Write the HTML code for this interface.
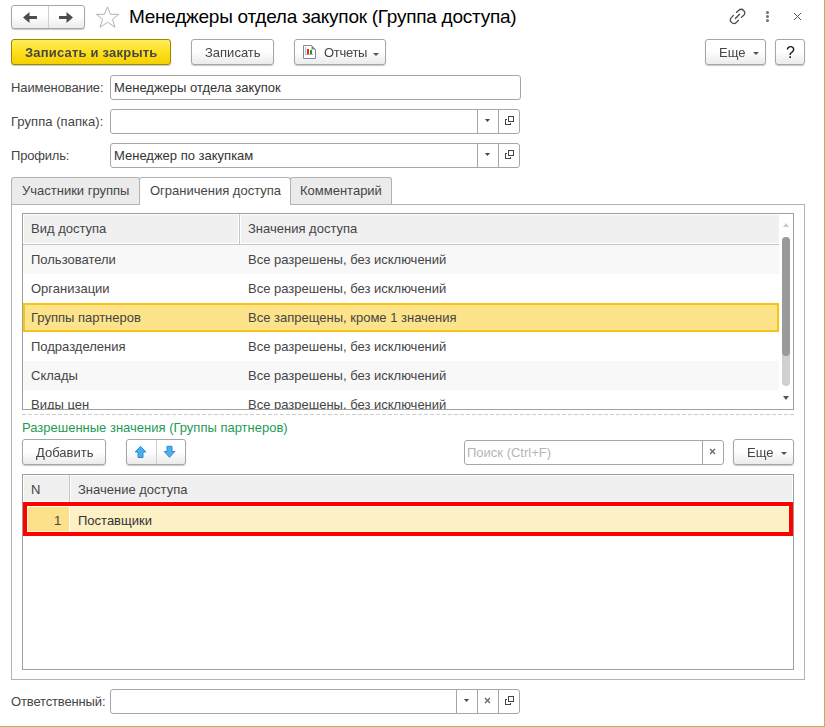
<!DOCTYPE html>
<html><head><meta charset="utf-8">
<style>
*{box-sizing:border-box}
html,body{margin:0;padding:0;width:825px;height:727px;overflow:hidden;background:#fff}
body{position:relative;font-family:"Liberation Sans",sans-serif;font-size:13px;color:#454545}
.a{position:absolute}
svg.a{overflow:visible}
.t{position:absolute;white-space:nowrap;line-height:15px}
.btn{position:absolute;border:1px solid #a6a6a6;border-radius:3px;background:linear-gradient(#ffffff 0%,#ffffff 45%,#ebebeb 100%);box-shadow:0 1px 1px rgba(0,0,0,.22);color:#444}
.btn .t{will-change:transform}
.fld{position:absolute;border:1px solid #a6a6a6;border-radius:3px;background:#fff}
.vd{position:absolute;top:0;bottom:0;width:1px;background:#a6a6a6}
</style></head><body>

<!-- window border -->
<div class="a" style="left:824px;top:0;width:1px;height:727px;background:#c0b05c"></div>
<div class="a" style="left:0;top:726px;width:825px;height:1px;background:#c0b05c"></div>

<!-- nav buttons -->
<div class="btn" style="left:11px;top:5px;width:74px;height:24px"></div>
<div class="a" style="left:48px;top:6px;width:1px;height:22px;background:#cfcfcf"></div>
<svg class="a" style="left:22px;top:11px" width="16" height="13" viewBox="0 0 16 13"><path d="M1 6.5 L7.5 1 V5 H15 V8 H7.5 V12 Z" fill="#4d4d4d"/></svg>
<svg class="a" style="left:58px;top:11px" width="16" height="13" viewBox="0 0 16 13"><path d="M15 6.5 L8.5 1 V5 H1 V8 H8.5 V12 Z" fill="#4d4d4d"/></svg>

<!-- star -->
<svg class="a" style="left:95px;top:6px" width="25" height="23" viewBox="0 0 25 23"><path d="M12.5 0.8 L15.6 8.3 L23.7 8.3 L17.4 13.4 L20 21.3 L12.5 16.3 L5 21.3 L7.6 13.4 L1.3 8.3 L9.4 8.3 Z" fill="none" stroke="#abb4be" stroke-width="1"/></svg>

<!-- title -->
<div class="t" style="left:129px;top:6px;font-size:19px;line-height:22px;color:#000;letter-spacing:-0.25px">Менеджеры отдела закупок (Группа доступа)</div>

<!-- top right icons -->
<svg class="a" style="left:726px;top:5px" width="24" height="24" viewBox="0 0 24 24"><g fill="none" stroke="#484848" stroke-width="1.25" stroke-linecap="round"><path d="M9.4 13.5 L13.5 9.2"/><path d="M7.4 10.4 L5.33 12.63 A3.5 3.5 0 0 0 10.27 17.57 L12.4 15.3"/><path d="M10.4 7.4 L12.83 5.33 A3.5 3.5 0 0 1 17.77 10.27 L15.3 12.4"/></g></svg>
<div class="a" style="left:766px;top:11px;width:3px;height:3px;border-radius:50%;background:#707070"></div>
<div class="a" style="left:766px;top:15px;width:3px;height:3px;border-radius:50%;background:#707070"></div>
<div class="a" style="left:766px;top:19px;width:3px;height:3px;border-radius:50%;background:#707070"></div>
<svg class="a" style="left:792px;top:11px" width="11" height="11" viewBox="0 0 11 11"><path d="M2 2 L9 9 M9 2 L2 9" stroke="#555" stroke-width="1"/></svg>

<!-- command bar -->
<div class="btn" style="left:11px;top:39px;width:160px;height:26px;border-color:#9c8800;background:linear-gradient(#ffec5c 0%,#ffe01e 50%,#f3d000 100%)">
  <div class="t" style="left:13px;top:5px;font-weight:bold;color:#474747;letter-spacing:0.2px">Записать и закрыть</div></div>
<div class="btn" style="left:191px;top:39px;width:83px;height:26px"><div class="t" style="left:13px;top:5px">Записать</div></div>
<div class="btn" style="left:294px;top:39px;width:92px;height:26px">
  <svg class="a" style="left:7px;top:4px" width="15" height="16" viewBox="0 0 15 16"><path d="M1.5 1.5 H9.5 L13.5 5.5 V14.5 H1.5 Z" fill="#fff" stroke="#7d8b98"/><path d="M9.5 1.5 V5.5 H13.5 Z" fill="#7d8b98"/><rect x="3" y="3" width="1" height="8" fill="#a9c6cc"/><rect x="3" y="10" width="8" height="1" fill="#b9a9c9"/><rect x="5" y="5" width="2" height="5" fill="#ff1a1a"/><rect x="8" y="6" width="2" height="4" fill="#19a019"/></svg>
  <div class="t" style="left:29px;top:5px;letter-spacing:-0.3px">Отчеты</div>
  <svg class="a" style="left:78px;top:13px" width="6" height="4" viewBox="0 0 6 4"><path d="M0 0 H6 L3 3 Z" fill="#555"/></svg>
</div>
<div class="btn" style="left:705px;top:39px;width:61px;height:26px"><div class="t" style="left:13px;top:5px">Еще</div>
  <svg class="a" style="left:47px;top:12px" width="6" height="4" viewBox="0 0 6 4"><path d="M0 0 H6 L3 3 Z" fill="#555"/></svg></div>
<div class="btn" style="left:775px;top:39px;width:30px;height:26px"><div class="t" style="left:0;width:29px;text-align:center;top:4px;color:#111;font-size:16px;line-height:17px">?</div></div>

<!-- fields -->
<div class="t" style="left:11px;top:80px;letter-spacing:-0.1px">Наименование:</div>
<div class="fld" style="left:110px;top:75px;width:411px;height:25px"><div class="t" style="left:3px;top:4px;color:#333">Менеджеры отдела закупок</div></div>

<div class="t" style="left:11px;top:114px;letter-spacing:0.05px">Группа (папка):</div>
<div class="fld" style="left:110px;top:109px;width:410px;height:25px">
  <div class="vd" style="left:366px"></div><div class="vd" style="left:387px"></div>
</div>
<div class="t" style="left:11px;top:148px;letter-spacing:-0.2px">Профиль:</div>
<div class="fld" style="left:110px;top:143px;width:410px;height:25px"><div class="t" style="left:3px;top:4px;color:#333">Менеджер по закупкам</div>
  <div class="vd" style="left:366px"></div><div class="vd" style="left:387px"></div>
</div>
<svg class="a" style="left:485px;top:119px" width="5" height="4" viewBox="0 0 5 4"><path d="M0 0 H5 L2.5 3 Z" fill="#444"/></svg>
<svg class="a" style="left:504px;top:115px" width="11" height="11" viewBox="0 0 11 11" shape-rendering="crispEdges"><path d="M4.5 1.5 H9.5 V6.5 H4.5 Z" fill="none" stroke="#444"/><path d="M2.5 4.5 H1.5 V9.5 H6.5 V8.5" fill="none" stroke="#444" stroke-linecap="square"/></svg>
<svg class="a" style="left:485px;top:153px" width="5" height="4" viewBox="0 0 5 4"><path d="M0 0 H5 L2.5 3 Z" fill="#444"/></svg>
<svg class="a" style="left:504px;top:149px" width="11" height="11" viewBox="0 0 11 11" shape-rendering="crispEdges"><path d="M4.5 1.5 H9.5 V6.5 H4.5 Z" fill="none" stroke="#444"/><path d="M2.5 4.5 H1.5 V9.5 H6.5 V8.5" fill="none" stroke="#444" stroke-linecap="square"/></svg>

<!-- tabs -->
<div class="a" style="left:11px;top:177px;width:129px;height:28px;border:1px solid #b2b2b2;border-bottom:none;background:#ebebeb;border-radius:3px 3px 0 0"></div>
<div class="t" style="left:22px;top:183px">Участники группы</div>
<div class="a" style="left:290px;top:177px;width:102px;height:28px;border:1px solid #b2b2b2;border-bottom:none;background:#ebebeb;border-radius:3px 3px 0 0"></div>
<div class="t" style="left:300px;top:183px">Комментарий</div>
<div class="a" style="left:139px;top:177px;width:152px;height:28px;border:1px solid #b2b2b2;border-bottom:none;background:#fff;border-radius:3px 3px 0 0"></div>
<div class="t" style="left:150px;top:183px">Ограничения доступа</div>

<!-- panel -->
<div class="a" style="left:11px;top:204px;width:794px;height:476px;border:1px solid #b2b2b2;border-top:none"></div>
<div class="a" style="left:11px;top:204px;width:129px;height:1px;background:#b2b2b2"></div>
<div class="a" style="left:290px;top:204px;width:515px;height:1px;background:#b2b2b2"></div>

<!-- table 1 -->
<div class="a" style="left:22px;top:213px;width:772px;height:197px;border:1px solid #a0a0a0;background:#fff;overflow:hidden">
  <div class="a" style="left:0;top:1px;width:756px;height:30px;background:#f0f0f0;border-bottom:1px solid #c6c6c6;box-shadow:inset 0 -1px 0 #fff,inset 1px 0 0 #fff"></div>
  <div class="a" style="left:215px;top:1px;width:1px;height:29px;background:#fff"></div>
  <div class="a" style="left:216px;top:0;width:1px;height:30px;background:#c6c6c6"></div>
  <div class="a" style="left:217px;top:1px;width:1px;height:29px;background:#fff"></div>
  <div class="t" style="left:8px;top:7px">Вид доступа</div>
  <div class="t" style="left:225px;top:7px">Значения доступа</div>
  <div class="a" style="left:0;top:31px;width:756px;height:29px;background:#f8f8f8"></div>
  <div class="t" style="left:8px;top:38px">Пользователи</div><div class="t" style="left:225px;top:38px">Все разрешены, без исключений</div>
  <div class="t" style="left:8px;top:67px">Организации</div><div class="t" style="left:225px;top:67px">Все разрешены, без исключений</div>
  <div class="a" style="left:0;top:89px;width:756px;height:29px;background:#fde38a;border:2px solid #f6c416"></div>
  <div class="t" style="left:8px;top:96px">Группы партнеров</div><div class="t" style="left:225px;top:96px">Все запрещены, кроме 1 значения</div>
  <div class="t" style="left:8px;top:125px">Подразделения</div><div class="t" style="left:225px;top:125px">Все разрешены, без исключений</div>
  <div class="a" style="left:0;top:147px;width:756px;height:29px;background:#f8f8f8"></div>
  <div class="t" style="left:8px;top:154px">Склады</div><div class="t" style="left:225px;top:154px">Все разрешены, без исключений</div>
  <div class="t" style="left:8px;top:183px">Виды цен</div><div class="t" style="left:225px;top:183px">Все разрешены, без исключений</div>
  <!-- scrollbar -->
  <svg class="a" style="left:760px;top:9px" width="6" height="4" viewBox="0 0 6 4"><path d="M0 4 H6 L3 0 Z" fill="#cacaca"/></svg>
  <div class="a" style="left:759px;top:23px;width:8px;height:149px;border-radius:4px;background:#d0d0d0"></div>
  <div class="a" style="left:759px;top:23px;width:8px;height:119px;border-radius:4px;background:#9a9a9a"></div>
  <svg class="a" style="left:760px;top:182px" width="6" height="4" viewBox="0 0 6 4"><path d="M0 0 H6 L3 4 Z" fill="#555"/></svg>
</div>
<!-- dashed -->
<div class="a" style="left:22px;top:414px;width:772px;height:1px;background:repeating-linear-gradient(90deg,#cdcdcd 0 4px,transparent 4px 6px)"></div>

<div class="t" style="left:22px;top:420px;color:#1f9a55">Разрешенные значения (Группы партнеров)</div>

<div class="btn" style="left:22px;top:439px;width:84px;height:26px"><div class="t" style="left:13px;top:5px">Добавить</div></div>
<div class="btn" style="left:126px;top:439px;width:60px;height:26px"></div>
<div class="a" style="left:156px;top:440px;width:1px;height:24px;background:#cfcfcf"></div>
<svg class="a" style="left:134px;top:445px" width="13" height="14" viewBox="0 0 13 14"><path d="M6.5 1.3 L11.8 7 H9 V12.5 H4 V7 H1.2 Z" fill="#4cb0ea" stroke="#2d8bd0" stroke-width="1"/></svg>
<svg class="a" style="left:163px;top:445px" width="13" height="14" viewBox="0 0 13 14"><path d="M4 1.3 H9 V6.5 H11.8 L6.5 12.3 L1.2 6.5 H4 Z" fill="#4cb0ea" stroke="#2d8bd0" stroke-width="1"/></svg>

<div class="fld" style="left:464px;top:440px;width:260px;height:25px"><div class="t" style="left:2px;top:4px;color:#b5b5b5">Поиск (Ctrl+F)</div><div class="vd" style="left:237px"></div></div>
<svg class="a" style="left:709px;top:448px" width="8" height="8" viewBox="0 0 8 8"><path d="M1 1 L6 6 M6 1 L1 6" stroke="#666" stroke-width="1.3"/></svg>
<div class="btn" style="left:733px;top:439px;width:61px;height:26px"><div class="t" style="left:13px;top:5px">Еще</div>
  <svg class="a" style="left:47px;top:12px" width="6" height="4" viewBox="0 0 6 4"><path d="M0 0 H6 L3 3 Z" fill="#555"/></svg></div>

<!-- table 2 -->
<div class="a" style="left:22px;top:474px;width:772px;height:196px;border:1px solid #a0a0a0;background:#fff;overflow:hidden">
  <div class="a" style="left:0;top:0;width:770px;height:27px;background:#f0f0f0;box-shadow:inset 0 0 0 1px #fff"></div>
  <div class="a" style="left:0;top:27px;width:770px;height:1px;background:#c6c6c6"></div>
  <div class="a" style="left:46px;top:0;width:1px;height:27px;background:#c6c6c6"></div>
  <div class="a" style="left:47px;top:1px;width:1px;height:25px;background:#fff"></div>
  <div class="t" style="left:8px;top:7px">N</div>
  <div class="t" style="left:55px;top:7px">Значение доступа</div>
  <div class="a" style="left:4px;top:31px;width:762px;height:26px;background:#fffad4"></div>
  <div class="a" style="left:4px;top:31px;width:762px;height:1px;background:#fff"></div>
  <div class="a" style="left:5px;top:32px;width:41px;height:24px;background:#fce08a"></div>
  <div class="a" style="left:46px;top:31px;width:1px;height:26px;background:#fff"></div>
  <div class="a" style="left:47px;top:32px;width:718px;height:24px;background:#fdf0c4"></div>
  <div class="t" style="left:31px;top:38px">1</div>
  <div class="t" style="left:55px;top:38px;color:#333">Поставщики</div>
</div>
<div class="a" style="left:23px;top:502px;width:770px;height:34px;border:4px solid #ff0000"></div>

<!-- bottom -->
<div class="t" style="left:11px;top:694px;letter-spacing:-0.15px">Ответственный:</div>
<div class="fld" style="left:110px;top:689px;width:410px;height:25px">
  <div class="vd" style="left:345px"></div><div class="vd" style="left:366px"></div><div class="vd" style="left:387px"></div>
</div>
<svg class="a" style="left:464px;top:699px" width="5" height="4" viewBox="0 0 5 4"><path d="M0 0 H5 L2.5 3 Z" fill="#444"/></svg>
<svg class="a" style="left:484px;top:697px" width="8" height="8" viewBox="0 0 8 8"><path d="M1 1 L6 6 M6 1 L1 6" stroke="#666" stroke-width="1.3"/></svg>
<svg class="a" style="left:504px;top:695px" width="11" height="11" viewBox="0 0 11 11" shape-rendering="crispEdges"><path d="M4.5 1.5 H9.5 V6.5 H4.5 Z" fill="none" stroke="#444"/><path d="M2.5 4.5 H1.5 V9.5 H6.5 V8.5" fill="none" stroke="#444" stroke-linecap="square"/></svg>

</body></html>
